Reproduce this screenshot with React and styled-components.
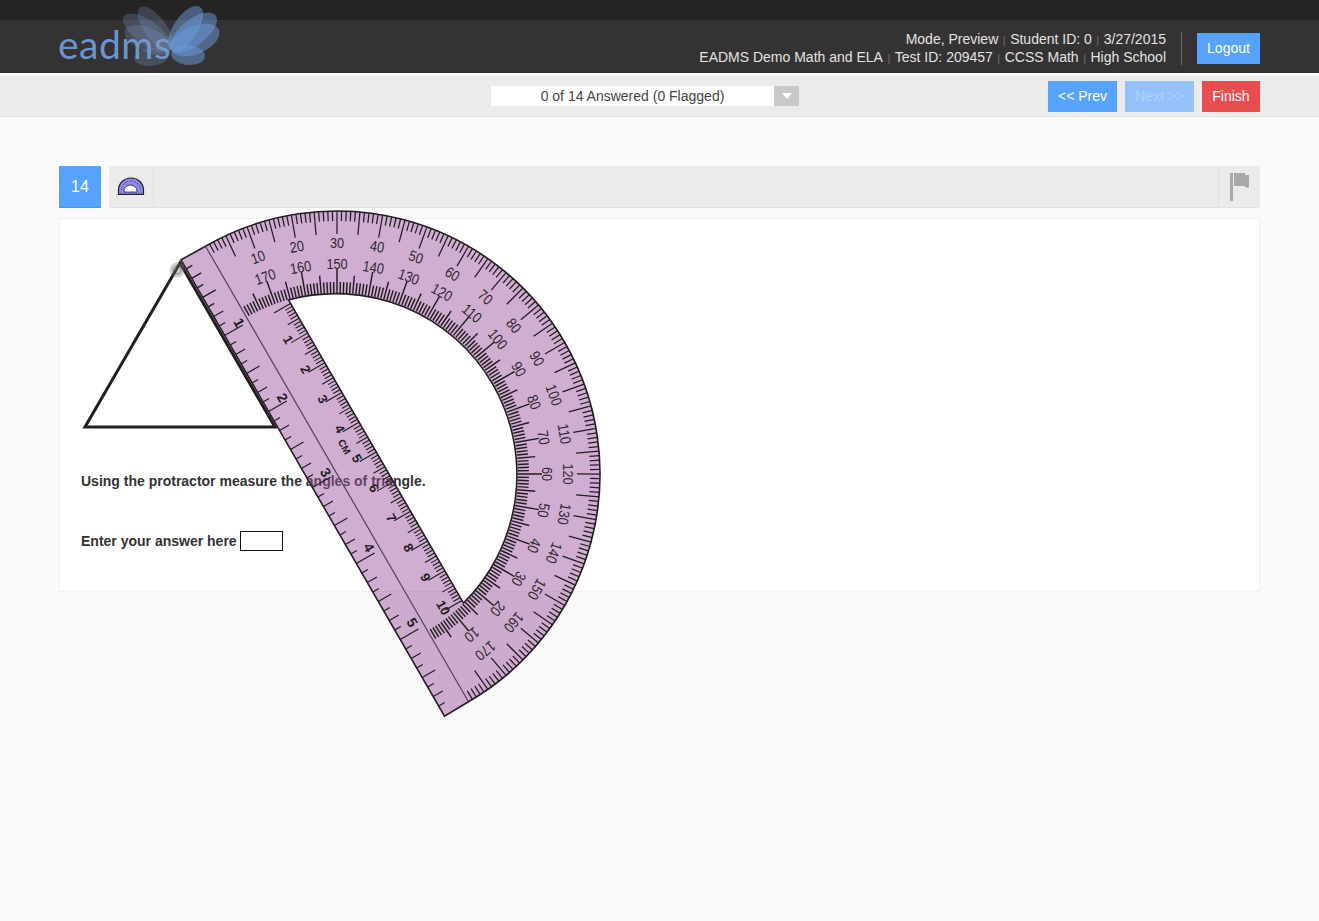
import React from "react";
import styled, { createGlobalStyle } from "styled-components";

const Global = createGlobalStyle`
  html, body { margin: 0; padding: 0; background: #fafafa; }
  body { font-family: "Liberation Sans", Arial, sans-serif; font-size: 14px; color: #333; }
`;
const Page = styled.div`
  position: relative; width: 1319px; height: 921px; overflow: hidden; background: #fafafa;
`;
const TopStrip = styled.div`height: 20px; background: #242424;`;
const Header = styled.header`
  height: 50px; padding: 3px 59px 0; background: #353233; border-bottom: 2px solid #fff;
  display: flex; align-items: center; justify-content: flex-end;
`;
const Meta = styled.div`
  color: #e2e2e2; font-size: 14px; line-height: 18px; text-align: right;
`;
const Sep = styled.span`color: #6f6f6f; margin: 0 4.5px; font-size: 11px; line-height: 0;`;
const Divider = styled.div`width: 1px; height: 33px; background: #6a6a6a; margin: 0 15px;`;
const Button = styled.div`
  height: 31px; line-height: 31px; text-align: center; font-size: 14px;
  width: ${p => p.$w}px; background: ${p => p.$bg}; color: ${p => p.$fg || "#fff"};
`;
const LogoWrap = styled.div`position: absolute; left: 55px; top: 4px; width: 170px; height: 66px;`;
const LogoText = styled.div`
  position: absolute; left: 3px; top: 16px; font-family: Lato, sans-serif; font-weight: 400;
  font-size: 39px; line-height: 48px; letter-spacing: 0.5px; color: #6a96cf;
`;
const Toolbar = styled.div`
  height: 41px; padding: 0 59px; background: #ebebeb; border-bottom: 1px solid #e1e1e1;
  display: flex; align-items: center;
`;
const Select = styled.div`
  width: 308px; height: 20px; margin-left: 432px; background: #fff; display: flex;
`;
const SelectText = styled.div`flex: 1; text-align: center; line-height: 20px; font-size: 14px; color: #444;`;
const SelectCaret = styled.div`
  width: 25px; background: #c9c9c9; display: flex; align-items: center; justify-content: center;
  &::after { content: ""; border: 5px solid transparent; border-top: 6px solid #fff; border-bottom: 0; }
`;
const NavGroup = styled.div`margin-left: auto; margin-top: 1px; display: flex; gap: 8px;`;
const Main = styled.main`padding: 49px 59px 0;`;
const QuestionBar = styled.div`display: flex; gap: 8px; height: 42px;`;
const QNumber = styled.div`
  width: 42px; box-sizing: border-box; background: #55a3ff; border-bottom: 1px solid #4b93e6; color: #fff;
  font-size: 16px; line-height: 41px; text-align: center;
`;
const ToolStrip = styled.div`
  flex: 1; display: flex; justify-content: space-between; background: #ebebeb; border-bottom: 1px solid #e1e1e1;
`;
const ToolCell = styled.div`
  width: ${p => p.$w}px; display: flex; align-items: center; justify-content: center; box-sizing: border-box;
  ${p => (p.$side === "right" ? "border-right" : "border-left")}: 1px solid #e1e1e1;
`;
const Card = styled.section`
  margin-top: 10px; height: 374px; box-sizing: border-box; background: #fff; border: 1px solid #f1f1f1;
  padding: 39px 21px 0;
`;
const TriangleSvg = styled.svg`display: block; width: 200px; height: 174px;`;
const Prompt = styled.div`
  margin-top: 39px; line-height: 20px; font-size: 14px; font-weight: 700; color: #333;
`;
const AnswerRow = styled.div`
  margin-top: 40px; display: flex; align-items: center; line-height: 20px; font-size: 14px; font-weight: 700; color: #333;
`;
const AnswerInput = styled.div`
  width: 43px; height: 20px; box-sizing: border-box; border: 1px solid #111; background: #fff; margin-left: 3px;
`;
const ProtractorSvg = styled.svg`
  position: absolute; left: 160px; top: 200px; width: 450px; height: 525px; pointer-events: none;
`;
const Body = styled.path`fill: rgba(153, 83, 157, 0.47); fill-rule: evenodd; stroke: #231d22; stroke-width: 1.6;`;
const Ticks = styled.path`fill: none; stroke: #231d22; stroke-width: ${p => p.$w || 1};`;
const Base = styled.line`stroke: #59405e; stroke-width: 1.2;`;
const Deg = styled.text`
  font-family: "Liberation Sans", sans-serif; font-size: 15px; fill: #2f282f; text-anchor: middle; dominant-baseline: central;
`;
const Rule = styled.text`
  font-family: "Liberation Sans", sans-serif; font-size: ${p => p.$s || 14}px; font-weight: 700; fill: #231d22; text-anchor: middle; dominant-baseline: central;
`;

const R = 263, r = 181;
const pol = (rad, deg) => {
  const a = (deg * Math.PI) / 180;
  return [(-rad * Math.cos(a)).toFixed(2), (-rad * Math.sin(a)).toFixed(2)];
};
const seg = (deg, r1, r2) => {
  const [a, b] = pol(r1, deg), [c, d] = pol(r2, deg);
  return `M${a} ${b}L${c} ${d}`;
};
let outerTicks = "", innerTicks = "";
for (let d = 1; d < 180; d++) {
  const five = d % 5 === 0, ten = d % 10 === 0;
  outerTicks += seg(d, R, R - (five ? 23 : 10));
  innerTicks += seg(d, r, r + (ten ? 24 : five ? 18 : 11));
}
let cmTicks = "";
const cm = 34.3, cm0 = -171;
for (let i = 1; i <= 100; i++) {
  if (cm0 + (i * cm) / 10 > 174) break;
  const len = i % 10 === 0 ? 19 : i % 5 === 0 ? 13 : 8;
  const x = (cm0 + (i * cm) / 10).toFixed(2);
  cmTicks += `M${x} -45V${-45 + len}`;
}
cmTicks += `M${cm0} -45V-26`;
let inTicks = "";
const inch = 87.8, in0 = -264;
for (let i = 1; i < 48; i++) {
  const len = i % 8 === 0 ? 21 : i % 4 === 0 ? 15 : i % 2 === 0 ? 11 : 7;
  const x = (in0 + (i * inch) / 8).toFixed(2);
  inTicks += `M${x} 28V${28 - len}`;
}
const degLabels = [];
for (let d = 10; d <= 170; d += 10) degLabels.push(d);
const label = (rad, deg) => {
  const [x, y] = pol(rad, deg);
  return { transform: `translate(${x} ${y}) rotate(${deg - 90}) scale(0.85 1)` };
};

function Protractor() {
  const body =
    `M-263.5 28L263.5 28L263 0A263 263 0 0 0 -263 0Z` +
    `M-175 -45L175 -45A181 181 0 0 0 -175 -45Z`;
  return (
    <ProtractorSvg viewBox="160 200 450 525">
      <g transform="translate(337 474) rotate(60)">
        <Body d={body} />
        <Base x1="-263" y1="0" x2="263" y2="0" />
        <Ticks d={outerTicks} $w={1.25} />
        <Ticks d={innerTicks} $w={1.45} />
        <Ticks d={cmTicks} $w={1.1} />
        <Ticks d={inTicks} $w={1.2} />
        {degLabels.map(d => (
          <Deg key={"o" + d} {...label(231, d)}>{d}</Deg>
        ))}
        {degLabels.map(d => (
          <Deg key={"i" + d} {...label(210, 180 - d)}>{d}</Deg>
        ))}
        {[1, 2, 3, 4, 5, 6, 7, 8, 9, 10].map(n => (
          <Rule key={"c" + n} x={cm0 + n * cm - (n === 10 ? 3 : 4)} y={-25} $s={13}>{n}</Rule>
        ))}
        {[1, 2, 3, 4, 5].map(n => (
          <Rule key={"n" + n} x={-180 + (n - 1) * 86.5} y={9}>{n}</Rule>
        ))}
        <Rule x={-20} y={-20} $s={10}>CM</Rule>
      </g>
      <circle cx="177" cy="270" r="7.5" fill="rgba(120,120,120,.35)" />
      <circle cx="177" cy="270" r="4" fill="none" stroke="rgba(80,80,80,.4)" strokeWidth="1.5" />
    </ProtractorSvg>
  );
}

function ButterflyLogo() {
  return (
    <LogoWrap>
      <LogoText>eadms</LogoText>
      <svg width="170" height="66" viewBox="55 4 170 66" style={{ position: "absolute", left: 0, top: 0 }}>
        <g fill="#7f9fcb" fillOpacity="0.26">
          <ellipse cx="155.500" cy="28.500" rx="11" ry="26" transform="rotate(-36 155.500 28.500)" />
          <ellipse cx="147.500" cy="33" rx="12" ry="29" transform="rotate(-54 147.500 33)" />
          <ellipse cx="148" cy="40" rx="12" ry="25" transform="rotate(-66 148 40)" />
          <ellipse cx="151" cy="57" rx="17" ry="9" transform="rotate(-4 151 57)" />
        </g>
        <g fill="#6c9bdc" fillOpacity="0.5">
          <ellipse cx="185.500" cy="28.500" rx="12" ry="26" transform="rotate(34 185.500 28.500)" />
          <ellipse cx="193.500" cy="32.500" rx="13" ry="28" transform="rotate(52 193.500 32.500)" />
          <ellipse cx="195" cy="40" rx="14" ry="26" transform="rotate(67 195 40)" />
          <ellipse cx="188" cy="55" rx="17" ry="10" transform="rotate(6 188 55)" />
        </g>
      </svg>
    </LogoWrap>
  );
}

export default function App() {
  return (
    <Page>
      <Global />
      <TopStrip />
      <Header>
        <Meta>
          <div>Mode, Preview<Sep>|</Sep>Student ID: 0<Sep>|</Sep>3/27/2015</div>
          <div>EADMS Demo Math and ELA<Sep>|</Sep>Test ID: 209457<Sep>|</Sep>CCSS Math<Sep>|</Sep>High School</div>
        </Meta>
        <Divider />
        <Button $w={63} $bg="#55a3ff">Logout</Button>
      </Header>
      <ButterflyLogo />
      <Toolbar>
        <Select>
          <SelectText>0 of 14 Answered (0 Flagged)</SelectText>
          <SelectCaret />
        </Select>
        <NavGroup>
          <Button $w={69} $bg="#55a3ff">&lt;&lt; Prev</Button>
          <Button $w={69} $bg="#93c2fb" $fg="#aed2fc">Next &gt;&gt;</Button>
          <Button $w={58} $bg="#e84e4f">Finish</Button>
        </NavGroup>
      </Toolbar>
      <Main>
        <QuestionBar>
          <QNumber>14</QNumber>
          <ToolStrip>
            <ToolCell $w={45} $side="right">
              <svg width="28" height="19" viewBox="0 0 28 19">
                <path d="M1.5 17.5V13A12.5 12 0 0 1 26.5 13V17.5Z" fill="#8f8af0" stroke="#222" strokeWidth="1.2" />
                <path d="M7 15V14A6.500 6 0 0 1 20 14V15Z" fill="#fff" stroke="#222" strokeWidth="0.8" />
                <path d="M4.500 13A9.500 9 0 0 1 23.500 13" fill="none" stroke="#222" strokeWidth="1" strokeDasharray="1 1.6" />
                <path d="M3 16.300H25" stroke="#222" strokeWidth="0.8" strokeDasharray="1 1.6" />
              </svg>
            </ToolCell>
            <ToolCell $w={42} $side="left">
              <svg width="20" height="28" viewBox="0 0 20 28">
                <rect x="0" y="0" width="3" height="28" fill="#a8a8a8" />
                <path d="M4 0H15V2H19V14.500H15V13H4Z" fill="#a8a8a8" />
              </svg>
            </ToolCell>
          </ToolStrip>
        </QuestionBar>
        <Card>
          <TriangleSvg viewBox="81 258 200 174">
            <path d="M180 263L85 427H275Z" fill="none" stroke="#231f20" strokeWidth="3" />
          </TriangleSvg>
          <Prompt>Using the protractor measure the angles of triangle.</Prompt>
          <AnswerRow>Enter your answer here<AnswerInput /></AnswerRow>
        </Card>
      </Main>
      <Protractor />
    </Page>
  );
}
